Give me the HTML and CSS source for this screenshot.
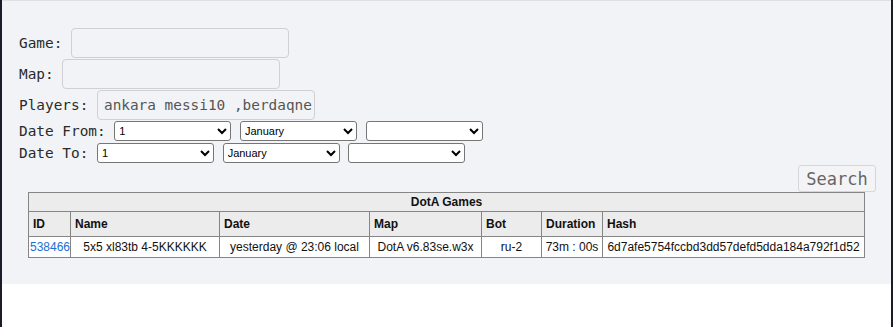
FILE: index.html
```html
<!DOCTYPE html>
<html lang="en">
<head>
  <meta charset="UTF-8" />
  <meta name="viewport" content="width=device-width, initial-scale=1.0"/>
  <title>DotA Games</title>
  <link rel="stylesheet" href="styles.css">
</head>
<body>
  <div class="frame">
    <div class="panel">
      <form class="search-form">
        <div class="row">
          <label for="game">Game:</label>
          <input type="text" id="game" class="field">
        </div>
        <div class="row">
          <label for="map">Map:</label>
          <input type="text" id="map" class="field">
        </div>
        <div class="row">
          <label for="players">Players:</label>
          <input type="text" id="players" class="field" value="ankara_messi10 ,berdaqne">
        </div>
        <div class="row date-row">
          <label>Date From:</label>
          <select class="pick"><option>1</option></select>
          <select class="pick"><option>January</option></select>
          <select class="pick"><option></option></select>
        </div>
        <div class="row date-row">
          <label>Date To:</label>
          <select class="pick"><option>1</option></select>
          <select class="pick"><option>January</option></select>
          <select class="pick"><option></option></select>
        </div>
        <div class="submit-row">
          <button type="button" class="search-btn">Search</button>
        </div>
      </form>

      <table class="games">
        <colgroup>
          <col style="width: 42px">
          <col style="width: 149px">
          <col style="width: 150px">
          <col style="width: 112px">
          <col style="width: 60px">
          <col style="width: 61px">
          <col style="width: 262px">
        </colgroup>
        <tr><th colspan="7" class="title">DotA Games</th></tr>
        <tr class="heads">
          <th>ID</th><th>Name</th><th>Date</th><th>Map</th><th>Bot</th><th>Duration</th><th>Hash</th>
        </tr>
        <tr class="game">
          <td><a href="#">538466</a></td>
          <td>5x5 xl83tb 4-5KKKKKK</td>
          <td>yesterday @ 23:06 local</td>
          <td>DotA v6.83se.w3x</td>
          <td>ru-2</td>
          <td>73m : 00s</td>
          <td>6d7afe5754fccbd3dd57defd5dda184a792f1d52</td>
        </tr>
      </table>
    </div>
  </div>
</body>
</html>
```

FILE: styles.css
```css
* { box-sizing: border-box; margin: 0; padding: 0; }
html, body { height: 100%; background: #fff; }
.frame {
  height: 100%;
  border-left: 2px solid #1c1c28;
  border-right: 2px solid #1c1c28;
}
.panel {
  height: 284px;
  background: #f2f3f7;
  border-top: 1px solid #dfe0e6;
  padding: 27px 15px 0 17px;
}
.search-form { font-family: "DejaVu Sans Mono", monospace; font-size: 14.4px; color: #2a2a2a; }
.row { display: flex; align-items: center; gap: 8.67px; margin-bottom: 1px; }
.field {
  width: 218px; height: 30px;
  border: 1px solid #cfd0d4; border-radius: 4px;
  background: transparent;
  padding: 0 1px 0 6px;
  line-height: 20px;
  font-family: "DejaVu Sans Mono", monospace; font-size: 14.4px; color: #555;
}
.date-row { height: 20px; margin-bottom: 2px; }
.pick {
  width: 117px; height: 20px;
  font-family: "Liberation Sans", Arial, sans-serif; font-size: 11px;
  color: #000; background: #fff;
  border: 1px solid #767676; border-radius: 3px;
}
.submit-row { display: flex; justify-content: flex-end; }
.search-btn {
  width: 78px; height: 27px;
  font-family: "DejaVu Sans Mono", monospace; font-size: 17px; color: #666;
  background: #f4f4f6; border: 1px solid #d6d6da; border-radius: 3px;
}
.games {
  width: 836px; margin: 0 0 0 9px;
  table-layout: fixed; border-collapse: collapse;
  font-family: "Liberation Sans", Arial, sans-serif; font-size: 12px; color: #111;
  background: #fff;
}
.games th, .games td { border: 1px solid #858585; white-space: nowrap; overflow: hidden; }
.games th { background: #ececec; font-weight: bold; text-align: left; padding: 5px 4px; height: 25px; }
.games th.title { text-align: center; padding: 2px; height: 19px; }
.games td { text-align: center; padding: 3px 1px; height: 21px; }
.games a { color: #1a6fd6; text-decoration: none; }
```
